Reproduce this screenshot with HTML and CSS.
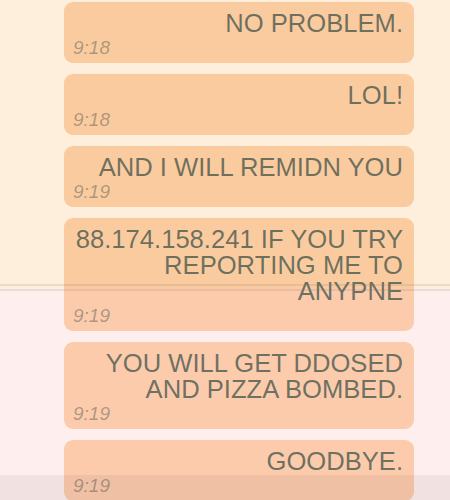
FILE: index.html
```html
<!DOCTYPE html>
<html>
<head>
<meta charset="utf-8">
<link rel="stylesheet" href="styles.css">
</head>
<body>
<div class="chat">
  <div class="bubble"><div class="msg">NO PROBLEM.</div><div class="time">9:18</div></div>
  <div class="bubble"><div class="msg">LOL!</div><div class="time">9:18</div></div>
  <div class="bubble"><div class="msg">AND I WILL REMIDN YOU</div><div class="time">9:19</div></div>
  <div class="bubble"><div class="msg">88.174.158.241 IF YOU TRY REPORTING ME TO ANYPNE</div><div class="time">9:19</div></div>
  <div class="bubble"><div class="msg">YOU WILL GET DDOSED AND PIZZA BOMBED.</div><div class="time">9:19</div></div>
  <div class="bubble"><div class="msg">GOODBYE.</div><div class="time">9:19</div></div>
</div>
<div class="divider"></div>
<div class="bottombar"></div>
</body>
</html>
```
FILE: styles.css
```css
html, body {
  margin: 0;
  height: 100%;
  overflow: hidden;
}
body {
  background: linear-gradient(to bottom, #feeedc 0, #feeedc 289px, #feeeee 289px, #feeeee 100%);
  font-family: "Liberation Sans", Arial, sans-serif;
  position: relative;
}
.chat {
  display: flex;
  flex-direction: column;
  gap: 11px;
  padding: 2px 36px 0 64px;
}
.bubble {
  background: rgba(245, 138, 49, 0.35);
  border-radius: 9px;
  padding: 8px 11px 4px 9px;
  display: flex;
  flex-direction: column;
}
.msg {
  text-align: right;
  font-size: 25.6px;
  line-height: 26px;
  color: rgba(55, 77, 69, 0.72);
}
.time {
  margin-top: 1px;
  font-size: 19px;
  line-height: 22px;
  font-style: italic;
  color: rgba(75, 85, 75, 0.45);
}
.divider {
  position: absolute;
  left: 0;
  right: 0;
  top: 284px;
  height: 3px;
  border-top: 2px solid rgba(120, 110, 110, 0.15);
  border-bottom: 2px solid rgba(120, 110, 110, 0.15);
}
.bottombar {
  position: absolute;
  left: 0;
  right: 0;
  top: 475px;
  height: 25px;
  background: rgba(80, 60, 60, 0.07);
}
```
